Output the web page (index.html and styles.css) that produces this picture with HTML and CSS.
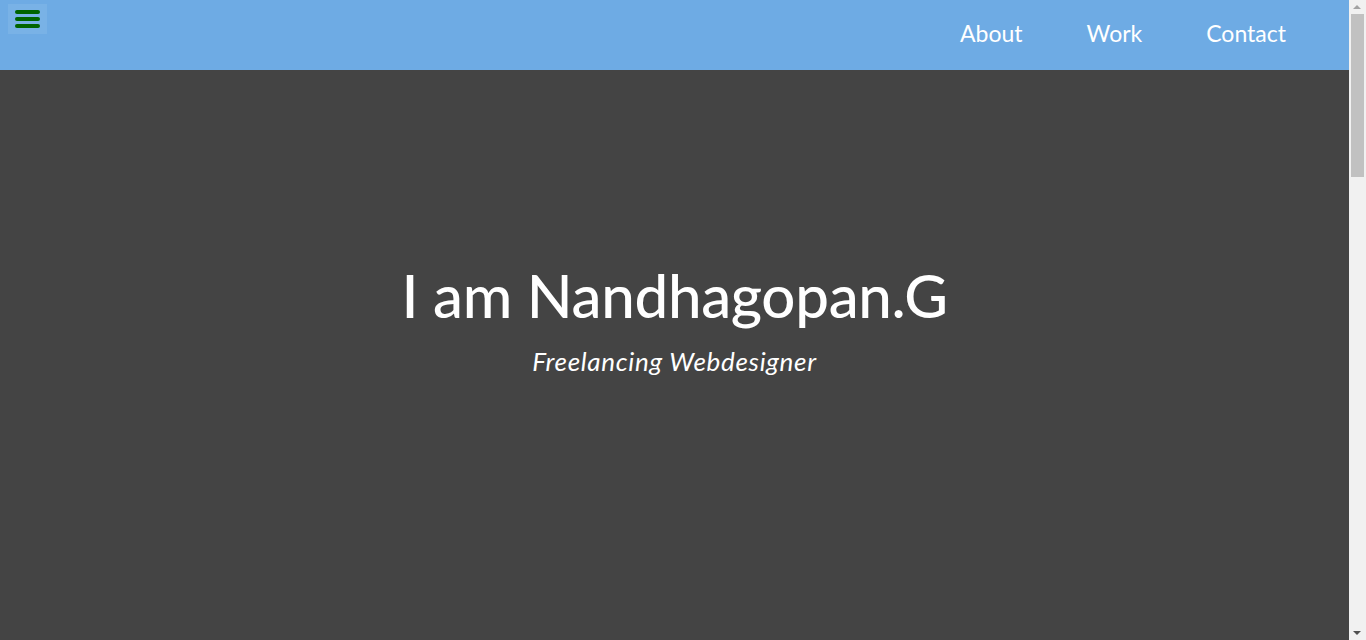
FILE: index.html
```html
<!DOCTYPE html>
<html lang="en">
<head>
<meta charset="utf-8">
<title>Nandhagopan.G</title>
<link rel="stylesheet" href="styles.css">
</head>
<body>
<div class="page">
  <header class="topbar">
    <button class="menu-btn" aria-label="Menu">
      <span class="bar"></span><span class="bar"></span><span class="bar"></span>
    </button>
    <nav class="nav">
      <a href="#about">About</a>
      <a href="#work">Work</a>
      <a href="#contact">Contact</a>
    </nav>
  </header>
  <section class="hero">
    <h1 class="title">I am Nandhagopan.G</h1>
    <p class="subtitle">Freelancing Webdesigner</p>
  </section>
</div>
<div class="scrollbar" aria-hidden="true">
  <span class="arrow up"></span>
  <span class="thumb"></span>
  <span class="arrow down"></span>
</div>
</body>
</html>
```
FILE: styles.css
```css
html, body {
  margin: 0;
  padding: 0;
  height: 100%;
  overflow: hidden;
}
body {
  font-family: "Lato", "Open Sans", sans-serif;
  background: #444444;
  color: #ffffff;
}
.page {
  margin-right: 17px;
  height: 100%;
}
.topbar {
  height: 70px;
  background: #6eabe4;
  display: flex;
  align-items: flex-start;
  justify-content: space-between;
}
.menu-btn {
  margin: 4px 0 0 8px;
  width: 39px;
  height: 30px;
  padding: 6px 7px;
  border: 0;
  background: #79b2e6;
  display: flex;
  flex-direction: column;
  justify-content: space-between;
  box-sizing: border-box;
}
.bar {
  display: block;
  height: 4px;
  border-radius: 2px;
  background: #006400;
}
.nav {
  display: flex;
  padding-top: 18px;
  padding-right: 31px;
}
.nav a {
  color: #ffffff;
  text-decoration: none;
  font-size: 23px;
  padding: 0 32px;
  line-height: 30px;
}
.hero {
  text-align: center;
  padding-top: 187px;
}
.title {
  margin: 0;
  font-size: 60px;
  font-weight: 500;
  letter-spacing: -0.3px;
  line-height: 76px;
}
.subtitle {
  margin: 12px 0 0;
  font-size: 26px;
  font-style: italic;
  letter-spacing: 0.7px;
  line-height: 32px;
}
.scrollbar {
  position: fixed;
  top: 0;
  right: 0;
  width: 17px;
  height: 100%;
  background: #f1f1f1;
}
.thumb {
  position: absolute;
  left: 2px;
  right: 2px;
  top: 14px;
  height: 163px;
  background: #c1c1c1;
}
.arrow {
  position: absolute;
  left: 4px;
  width: 0;
  height: 0;
  border-left: 4px solid transparent;
  border-right: 4px solid transparent;
}
.arrow.up {
  top: 5px;
  border-bottom: 4px solid #a3a3a3;
}
.arrow.down {
  bottom: 5px;
  border-top: 4px solid #505050;
}
```
